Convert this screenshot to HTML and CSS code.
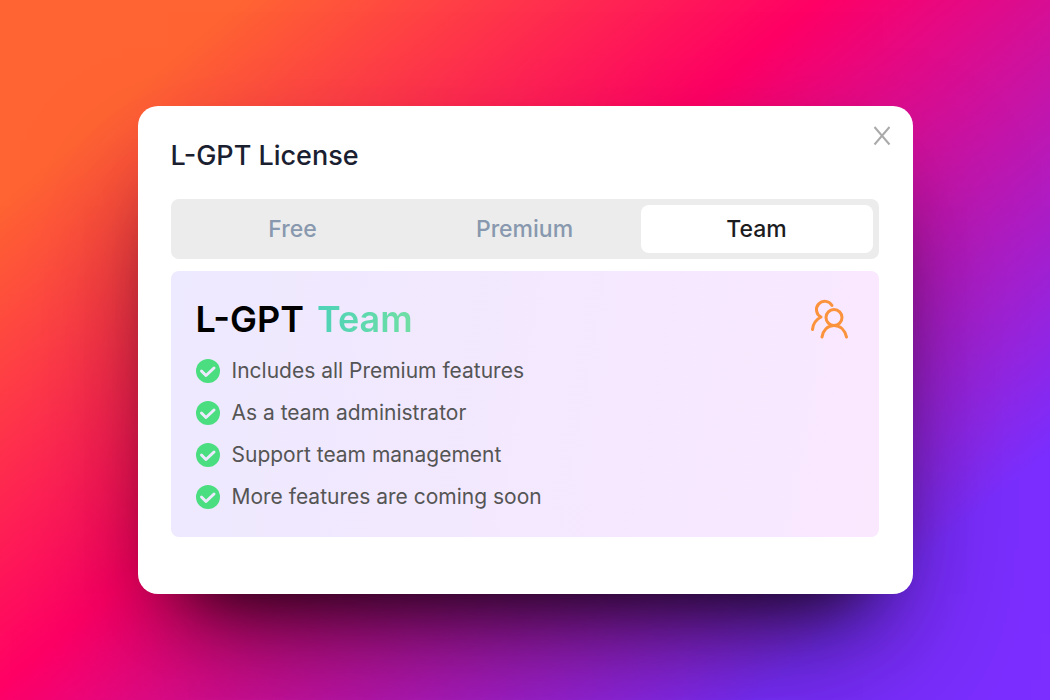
FILE: index.html
```html
<!DOCTYPE html>
<html lang="en">
<head>
<meta charset="utf-8">
<meta name="viewport" content="width=device-width, initial-scale=1">
<title>L-GPT License</title>
<link rel="stylesheet" href="styles.css">
</head>
<body>
<main class="dialog" role="dialog" aria-labelledby="title">
  <button class="close" type="button" aria-label="Close">
    <svg class="close-icon" viewBox="0 0 18 20" aria-hidden="true"><path d="M1.500 1 16.500 18.500M16.500 1 1.500 18.500"/></svg>
  </button>
  <h1 class="title" id="title">L-GPT License</h1>
  <div class="tabs" role="tablist">
    <button class="tab" type="button" role="tab" aria-selected="false">Free</button>
    <button class="tab" type="button" role="tab" aria-selected="false">Premium</button>
    <button class="tab tab-active" type="button" role="tab" aria-selected="true">Team</button>
  </div>
  <section class="plan">
    <header class="plan-header">
      <h2 class="plan-name">L-GPT <span class="plan-tier">Team</span></h2>
      <svg class="team-icon" viewBox="0 -1 40 40" aria-hidden="true">
        <circle cx="24" cy="17.500" r="8"/>
        <path d="M12 37C13 30.500 17.500 25.500 24 25.500S35 30.500 36.500 37M22 5.500A8.300 8.300 0 1 0 11 17C6 19.500 3 24 2.500 29.500"/>
      </svg>
    </header>
    <ul class="features">
      <li class="feature"><svg class="check" viewBox="0 0 24 24" aria-hidden="true"><circle cx="12" cy="12" r="12"/><path d="m5.500 12 4.500 4.500L18 9"/></svg>Includes all Premium features</li>
      <li class="feature"><svg class="check" viewBox="0 0 24 24" aria-hidden="true"><circle cx="12" cy="12" r="12"/><path d="m5.500 12 4.500 4.500L18 9"/></svg>As a team administrator</li>
      <li class="feature"><svg class="check" viewBox="0 0 24 24" aria-hidden="true"><circle cx="12" cy="12" r="12"/><path d="m5.500 12 4.500 4.500L18 9"/></svg>Support team management</li>
      <li class="feature"><svg class="check" viewBox="0 0 24 24" aria-hidden="true"><circle cx="12" cy="12" r="12"/><path d="m5.500 12 4.500 4.500L18 9"/></svg>More features are coming soon</li>
    </ul>
  </section>
</main>
</body>
</html>
```
FILE: styles.css
```css
* { box-sizing: border-box; }
body {
  margin: 0;
  min-height: 100vh;
  display: grid;
  place-items: center;
  padding: 24px;
  font-family: Inter, "Liberation Sans", sans-serif;
  background: linear-gradient(140deg, #ff6432 12.8%, #ff0065 43.5%, #7b2eff 84.3%);
}
.dialog {
  position: relative;
  width: 100%;
  max-width: 775px;
  padding: 32px 34px 57px 33px;
  border-radius: 20px;
  background: #fff;
  box-shadow: 0 70px 130px -30px rgba(0, 0, 0, 0.55), 0 50px 70px -50px rgba(0, 0, 0, 0.9);
}
.close {
  position: absolute;
  top: 16px;
  right: 17px;
  display: grid;
  place-items: center;
  width: 28px;
  height: 28px;
  padding: 0;
  border: 0;
  background: none;
  cursor: pointer;
}
.close-icon { width: 18px; height: 20px; fill: none; stroke: #aaa; stroke-width: 2; }
.title {
  margin: 0 0 25px;
  font-size: 27px;
  line-height: 36px;
  font-weight: 500;
  color: #1a2030;
}
.tabs {
  display: grid;
  grid-template-columns: repeat(3, 1fr);
  padding: 6px;
  margin-bottom: 12px;
  border-radius: 8px;
  background: #ececec;
}
.tab {
  height: 48px;
  padding: 0;
  border: 0;
  border-radius: 8px;
  background: none;
  font: 500 23px/32px Inter, "Liberation Sans", sans-serif;
  color: #8898ae;
  cursor: pointer;
}
.tab-active { background: #fff; color: #1c1c1f; }
.plan {
  padding: 24px 25px 22px;
  border-radius: 8px;
  background: linear-gradient(100deg, #ede9fe, #fae8ff);
}
.plan-header {
  display: flex;
  justify-content: space-between;
  align-items: center;
  padding-right: 4px;
}
.plan-name { margin: 0; font-size: 36px; line-height: 48px; font-weight: 600; color: #000; }
.plan-tier {
  margin-left: 4px;
  background: linear-gradient(90deg, #4ed2b8, #70dfa4);
  -webkit-background-clip: text;
  background-clip: text;
  color: transparent;
}
.team-icon { width: 40px; height: 40px; fill: none; stroke: #fb923c; stroke-width: 3; stroke-linecap: round; stroke-linejoin: round; }
.features { display: grid; gap: 6px; margin: 10px 0 0; padding: 0; list-style: none; }
.feature {
  display: flex;
  align-items: center;
  gap: 12px;
  font-size: 21px;
  line-height: 36px;
  color: #555;
}
.check { flex: none; width: 24px; height: 24px; fill: #4ade80; }
.check path { fill: none; stroke: #ede9fe; stroke-width: 3; stroke-linecap: round; stroke-linejoin: round; }
```
